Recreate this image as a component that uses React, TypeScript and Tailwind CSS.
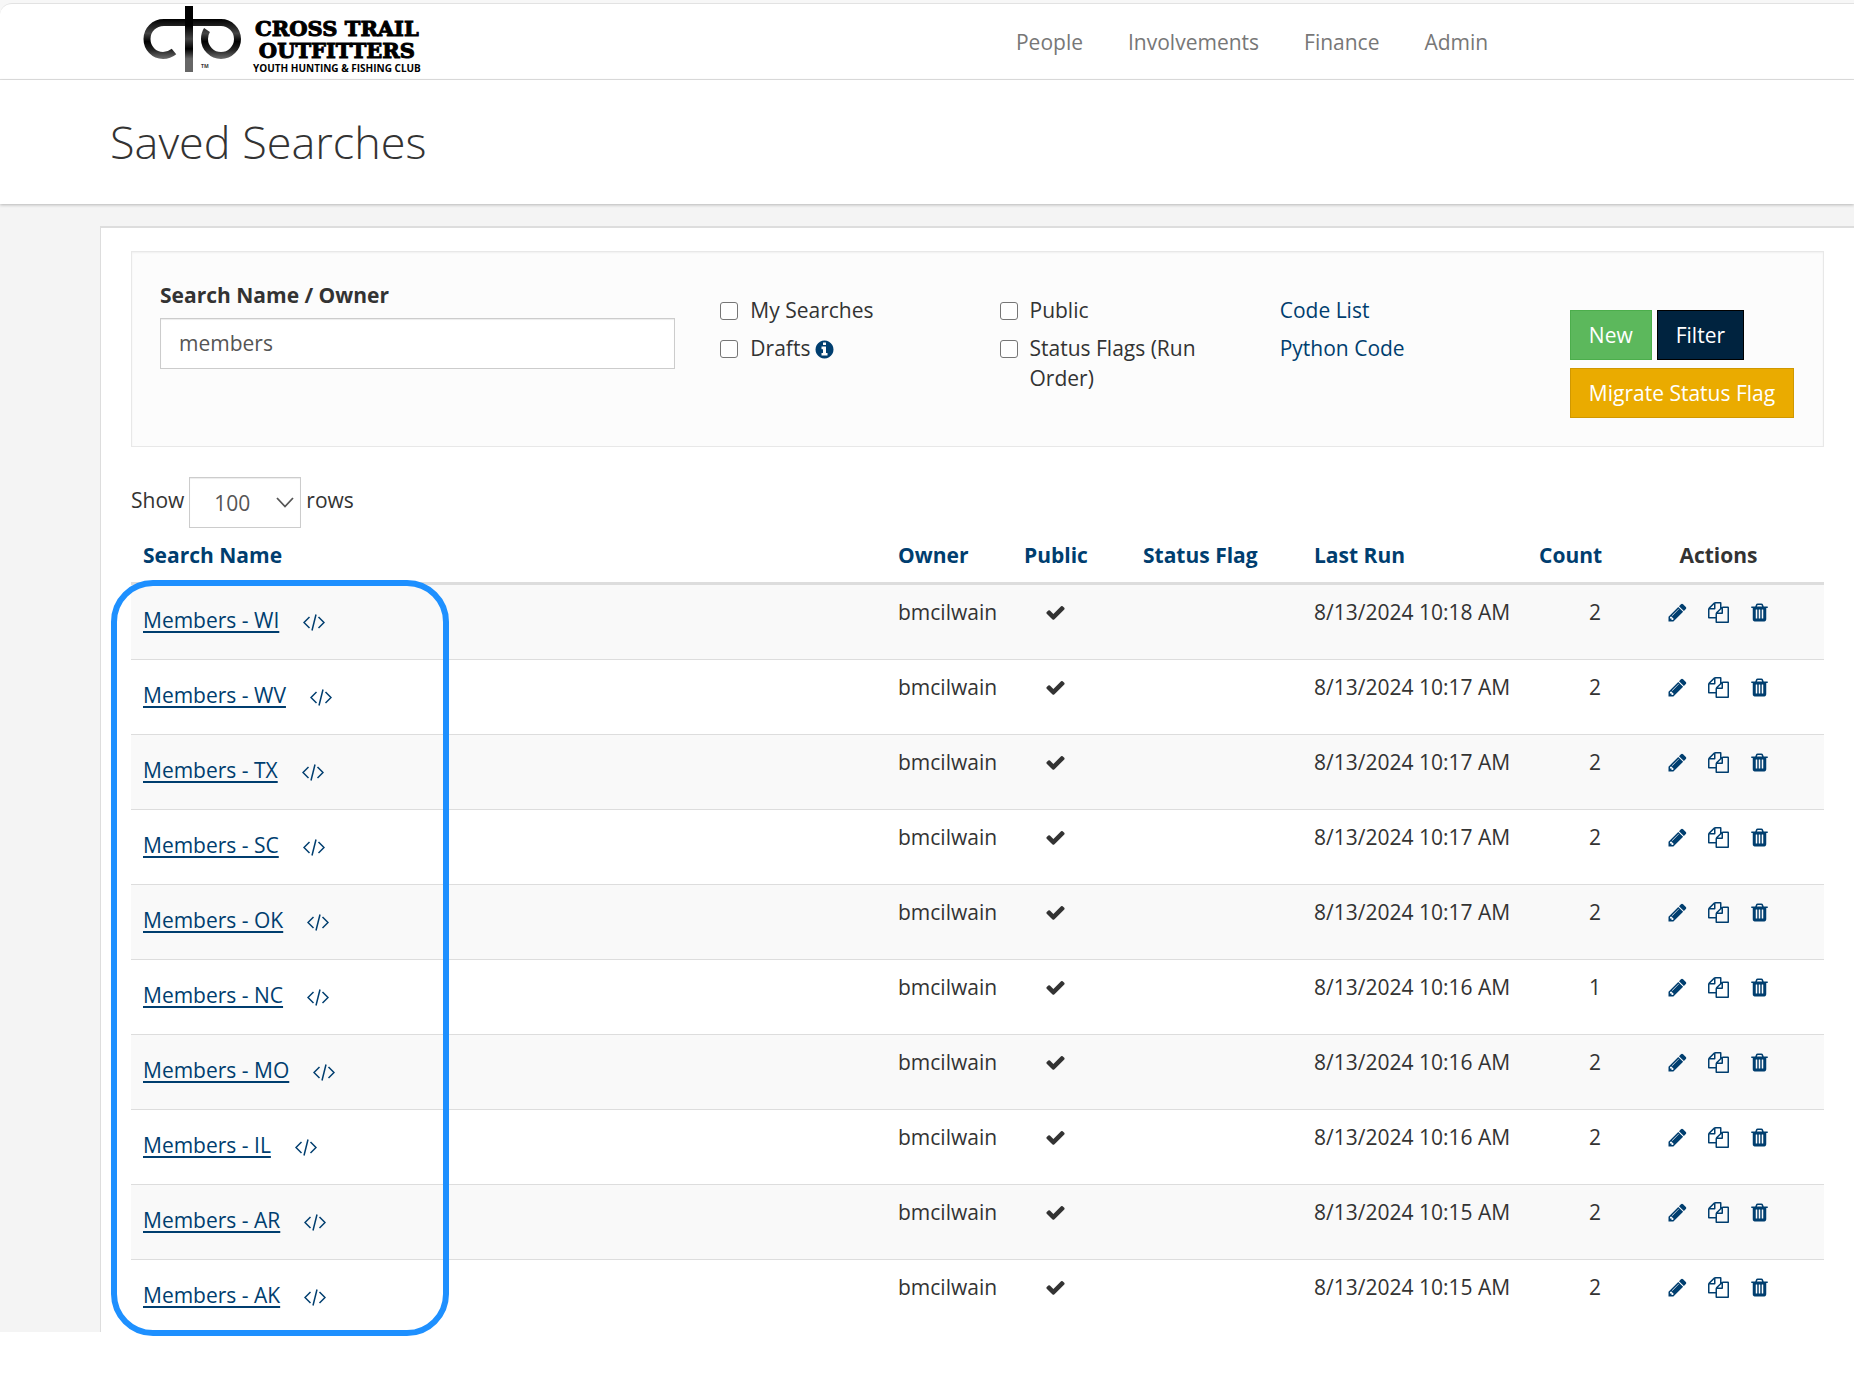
import type { ReactNode } from 'react';

const navItems = ['People', 'Involvements', 'Finance', 'Admin'];

const searches = [
  { name: 'Members - WI', lastRun: '8/13/2024 10:18 AM', count: 2 },
  { name: 'Members - WV', lastRun: '8/13/2024 10:17 AM', count: 2 },
  { name: 'Members - TX', lastRun: '8/13/2024 10:17 AM', count: 2 },
  { name: 'Members - SC', lastRun: '8/13/2024 10:17 AM', count: 2 },
  { name: 'Members - OK', lastRun: '8/13/2024 10:17 AM', count: 2 },
  { name: 'Members - NC', lastRun: '8/13/2024 10:16 AM', count: 1 },
  { name: 'Members - MO', lastRun: '8/13/2024 10:16 AM', count: 2 },
  { name: 'Members - IL', lastRun: '8/13/2024 10:16 AM', count: 2 },
  { name: 'Members - AR', lastRun: '8/13/2024 10:15 AM', count: 2 },
  { name: 'Members - AK', lastRun: '8/13/2024 10:15 AM', count: 2 },
];

const icons = {
  check:
    'M1671 566q0 40-28 68l-724 724-136 136q-28 28-68 28t-68-28l-136-136-362-362q-28-28-28-68t28-68l136-136q28-28 68-28t68 28l294 295 656-657q28-28 68-28t68 28l136 136q28 28 28 68z',
  pencil:
    'M491 1536l91-91-235-235-91 91v107h128v128h107zm523-928q0-22-22-22-10 0-17 7l-542 542q-7 7-7 17 0 22 22 22 10 0 17-7l542-542q7-7 7-17zm-54-192l416 416-832 832h-416v-416zm683 96q0 53-37 90l-166 166-416-416 166-165q36-38 90-38 53 0 91 38l235 234q37 39 37 91z',
  files:
    'M1696 384q40 0 68 28t28 68v1216q0 40-28 68t-68 28h-960q-40 0-68-28t-28-68v-288h-544q-40 0-68-28t-28-68v-672q0-40 20-88t48-76l408-408q28-28 76-48t88-20h416q40 0 68 28t28 68v328q68-40 128-40h416zm-544 213l-299 299h299v-299zm-640-384l-299 299h299v-299zm196 647l316-316v-416h-384v416q0 40-28 68t-68 28h-416v640h512v-256q0-40 20-88t48-76zm956 804v-1152h-384v416q0 40-28 68t-68 28h-416v640h896z',
  trash:
    'M704 1376v-704q0-14-9-23t-23-9h-64q-14 0-23 9t-9 23v704q0 14 9 23t23 9h64q14 0 23-9t9-23zm256 0v-704q0-14-9-23t-23-9h-64q-14 0-23 9t-9 23v704q0 14 9 23t23 9h64q14 0 23-9t9-23zm256 0v-704q0-14-9-23t-23-9h-64q-14 0-23 9t-9 23v704q0 14 9 23t23 9h64q14 0 23-9t9-23zm-544-992h448l-48-117q-7-9-17-11h-317q-10 2-17 11zm928 32v64q0 14-9 23t-23 9h-96v948q0 83-47 143.5t-113 60.5h-832q-66 0-113-58.5t-47-141.5v-952h-96q-14 0-23-9t-9-23v-64q0-14 9-23t23-9h309l70-167q15-37 54-63t79-26h320q40 0 79 26t54 63l70 167h309q14 0 23 9t9 23z',
  info: 'M1152 1376v-160q0-14-9-23t-23-9h-96v-512q0-14-9-23t-23-9h-320q-14 0-23 9t-9 23v160q0 14 9 23t23 9h96v320h-96q-14 0-23 9t-9 23v160q0 14 9 23t23 9h448q14 0 23-9t9-23zm-128-896v-160q0-14-9-23t-23-9h-192q-14 0-23 9t-9 23v160q0 14 9 23t23 9h192q14 0 23-9t9-23zm640 416q0 209-103 385.5t-279.5 279.5-385.5 103-385.5-103-279.5-279.5-103-385.5 103-385.5 279.5-279.5 385.5-103 385.5 103 279.5 279.5 103 385.5z',
};

function Icon({ name }: { name: keyof typeof icons }) {
  return (
    <svg viewBox="0 0 1792 1792" fill="currentColor" className="size-[21px] shrink-0" aria-hidden="true">
      <path d={icons[name]} />
    </svg>
  );
}

function CodeIcon() {
  return (
    <svg width="22" height="17" viewBox="0 0 22 17" fill="none" stroke="currentColor" strokeWidth="1.5" aria-hidden="true">
      <path d="M6.5 3L1 8.5L6.5 14M15.5 3L21 8.5L15.5 14M13 0.5L9 16.5" />
    </svg>
  );
}

function Logo() {
  return (
    <a href="#" className="flex items-start gap-3 text-black">
      <svg width="98" height="66" viewBox="0 0 98 66" fill="none" aria-hidden="true">
        <defs>
          <linearGradient id="loop" x1="0" y1="13" x2="0" y2="54" gradientUnits="userSpaceOnUse">
            <stop offset="0" stopColor="#000" />
            <stop offset="0.35" stopColor="#444" />
            <stop offset="0.55" stopColor="#000" />
            <stop offset="0.75" stopColor="#222" />
            <stop offset="1" stopColor="#777" />
          </linearGradient>
          <linearGradient id="stem" x1="0" y1="0" x2="0" y2="66" gradientUnits="userSpaceOnUse">
            <stop offset="0.3" stopColor="#000" />
            <stop offset="0.5" stopColor="#444" />
            <stop offset="0.65" stopColor="#000" />
            <stop offset="0.8" stopColor="#666" />
          </linearGradient>
        </defs>
        <path
          d="M78 16.500H21C11 16.500 4 24 4 33C4 42 11 49.500 20 49.500C24.500 49.500 28 48 31 45.500M64 24C62 27 61.500 30 61.500 33C61.500 42 69 49.500 78 49.500C87 49.500 94.500 42 94.500 33C94.500 24 87 16.500 78 16.500"
          stroke="url(#loop)"
          strokeWidth="7"
        />
        <rect x="42" y="0" width="8" height="66" fill="url(#stem)" />
        <text x="58" y="62" fill="#333" className="font-['Open_Sans',sans-serif] text-[5px] font-bold">TM</text>
      </svg>
      <span className="flex flex-col items-center pt-3 font-['DejaVu_Serif',serif] text-[21px] leading-[22px] font-bold">
        <span className="[-webkit-text-stroke:1px_black]">CROSS TRAIL</span>
        <span className="[-webkit-text-stroke:1px_black]">OUTFITTERS</span>
        <span className="font-['Open_Sans',sans-serif] text-[10px] leading-3 font-bold">YOUTH HUNTING &amp; FISHING CLUB</span>
      </span>
    </a>
  );
}

function CheckOption({ id, children }: { id: string; children: ReactNode }) {
  return (
    <div className="flex items-start gap-3">
      <input
        id={id}
        type="checkbox"
        className="mt-[7px] size-[18px] shrink-0 appearance-none rounded-[3px] border border-[#767676] bg-white checked:bg-[#003e6f]"
      />
      <label htmlFor={id} className="flex items-center gap-1">
        {children}
      </label>
    </div>
  );
}

function FilterPanel() {
  return (
    <form className="grid grid-cols-[515fr_234fr_235fr_245fr_225fr] gap-x-[45px] border border-[#e8e8e8] bg-[#fcfcfc] p-7 shadow-[inset_0_1px_2px_rgba(0,0,0,0.05)]">
      <div>
        <label htmlFor="search" className="mb-2 block font-bold">
          Search Name / Owner
        </label>
        <input
          id="search"
          type="text"
          defaultValue="members"
          className="h-[51px] w-full border border-[#ccc] bg-white px-[18px] pb-0.5 text-[#555] shadow-[inset_0_1px_1px_rgba(0,0,0,0.075)]"
        />
      </div>
      <div className="flex flex-col gap-2 pt-[15px]">
        <CheckOption id="mine">My Searches</CheckOption>
        <CheckOption id="drafts">
          Drafts
          <span className="pt-0.5 text-[#003e6f]">
            <Icon name="info" />
          </span>
        </CheckOption>
      </div>
      <div className="flex flex-col gap-2 pt-[15px]">
        <CheckOption id="public">Public</CheckOption>
        <CheckOption id="flags">Status Flags (Run Order)</CheckOption>
      </div>
      <div className="flex flex-col items-start gap-2 pt-[15px] text-[#003e6f]">
        <a href="#">Code List</a>
        <a href="#">Python Code</a>
      </div>
      <div className="flex flex-wrap content-start gap-x-[5px] gap-y-2 pt-[30px] text-white">
        <button type="button" className="h-[50px] border border-[#4cae4c] bg-[#5cb85c] px-[18px]">
          New
        </button>
        <button type="submit" className="h-[50px] border border-black bg-[#00233f] px-[18px]">
          Filter
        </button>
        <button type="button" className="h-[50px] border border-[#d09800] bg-[#eaab00] px-[18px] whitespace-nowrap">
          Migrate Status Flag
        </button>
      </div>
    </form>
  );
}

function SearchTable() {
  return (
    <table className="w-full table-fixed border-collapse">
      <colgroup>
        <col />
        <col className="w-[126px]" />
        <col className="w-[119px]" />
        <col className="w-[171px]" />
        <col className="w-[225px]" />
        <col className="w-[86px]" />
        <col className="w-[211px]" />
      </colgroup>
      <thead>
        <tr className="border-b-[3px] border-[#ddd] text-left text-[#003e6f] [&>th]:p-3">
          <th>Search Name</th>
          <th>Owner</th>
          <th>Public</th>
          <th>Status Flag</th>
          <th>Last Run</th>
          <th className="text-right">Count</th>
          <th className="text-center text-[#333]">Actions</th>
        </tr>
      </thead>
      <tbody>
        {searches.map((s) => (
          <tr
            key={s.name}
            className="h-[75px] border-b border-[#ddd] align-top first:h-[76px] odd:bg-[#f9f9f9] last:h-[72px] last:border-b-0 [&>td]:px-3 [&>td]:pt-3"
          >
            <td>
              <div className="flex items-center gap-6 pt-2 text-[#003e6f]">
                <a href="#" className="underline decoration-2 underline-offset-3">
                  {s.name}
                </a>
                <a href="#" aria-label={`Code for ${s.name}`} className="pt-1">
                  <CodeIcon />
                </a>
              </div>
            </td>
            <td>bmcilwain</td>
            <td>
              <div className="flex h-[30px] w-[63px] items-center justify-center">
                <Icon name="check" />
              </div>
            </td>
            <td></td>
            <td className="whitespace-nowrap">{s.lastRun}</td>
            <td className="text-right">{s.count}</td>
            <td>
              <div className="flex h-[30px] items-center justify-center gap-5 text-[#003e6f]">
                <button type="button" aria-label="Edit">
                  <Icon name="pencil" />
                </button>
                <button type="button" aria-label="Copy">
                  <Icon name="files" />
                </button>
                <button type="button" aria-label="Delete">
                  <Icon name="trash" />
                </button>
              </div>
            </td>
          </tr>
        ))}
      </tbody>
    </table>
  );
}

export default function App() {
  return (
    <div className="bg-[#f7f7f7] pt-[3px] font-['Open_Sans',sans-serif] text-[21px] leading-[30px] text-[#333]">
      <div className="rounded-tl-xl border-t border-[#e2e2e2] bg-white">
        {/* Top navigation */}
        <header className="flex h-[76px] items-start border-b border-[#e2e2e2]">
          <div className="w-[54.8%] pt-0.5 pl-[143px]">
            <Logo />
          </div>
          <nav className="flex gap-[45px] pt-[23px] text-[#777]">
            {navItems.map((item) => (
              <a key={item} href="#">
                {item}
              </a>
            ))}
          </nav>
        </header>

        <div className="relative px-[110px] py-8 shadow-[0_1px_3px_rgba(0,0,0,0.25)]">
          <h1 className="text-[45px] leading-[60px] font-light">Saved Searches</h1>
        </div>

        <main className="bg-[#f4f4f4] pt-[22px] pl-[100px]">
          <div className="border-t-2 border-l border-[#ddd] bg-white pt-[23px] pr-[30px] pl-[30px]">
            <FilterPanel />

            <div className="mt-[30px] flex items-start gap-[5px]">
              <label htmlFor="rows" className="pt-2">
                Show
              </label>
              <div className="relative">
                <select
                  id="rows"
                  defaultValue="100"
                  className="h-[51px] w-[112px] appearance-none border border-[#ccc] bg-white pt-px pl-6 text-[#555] shadow-[inset_0_1px_1px_rgba(0,0,0,0.075)]"
                >
                  <option>10</option>
                  <option>25</option>
                  <option>50</option>
                  <option>100</option>
                </select>
                <svg
                  width="18"
                  height="11"
                  viewBox="0 0 18 11"
                  fill="none"
                  stroke="#555"
                  strokeWidth="1.800"
                  className="pointer-events-none absolute top-5 right-[7px]"
                  aria-hidden="true"
                >
                  <path d="M1 1L9 9.500L17 1" />
                </svg>
              </div>
              <span className="pt-2">rows</span>
            </div>

            {/* Results, with the marker around the search names */}
            <div className="relative">
              <SearchTable />
              <div className="pointer-events-none absolute top-[52px] -bottom-1 -left-5 w-[338px] rounded-[42px] border-[6px] border-[#1e90ff]" />
            </div>
          </div>
        </main>

        <div className="h-[46px]" />
      </div>
    </div>
  );
}
